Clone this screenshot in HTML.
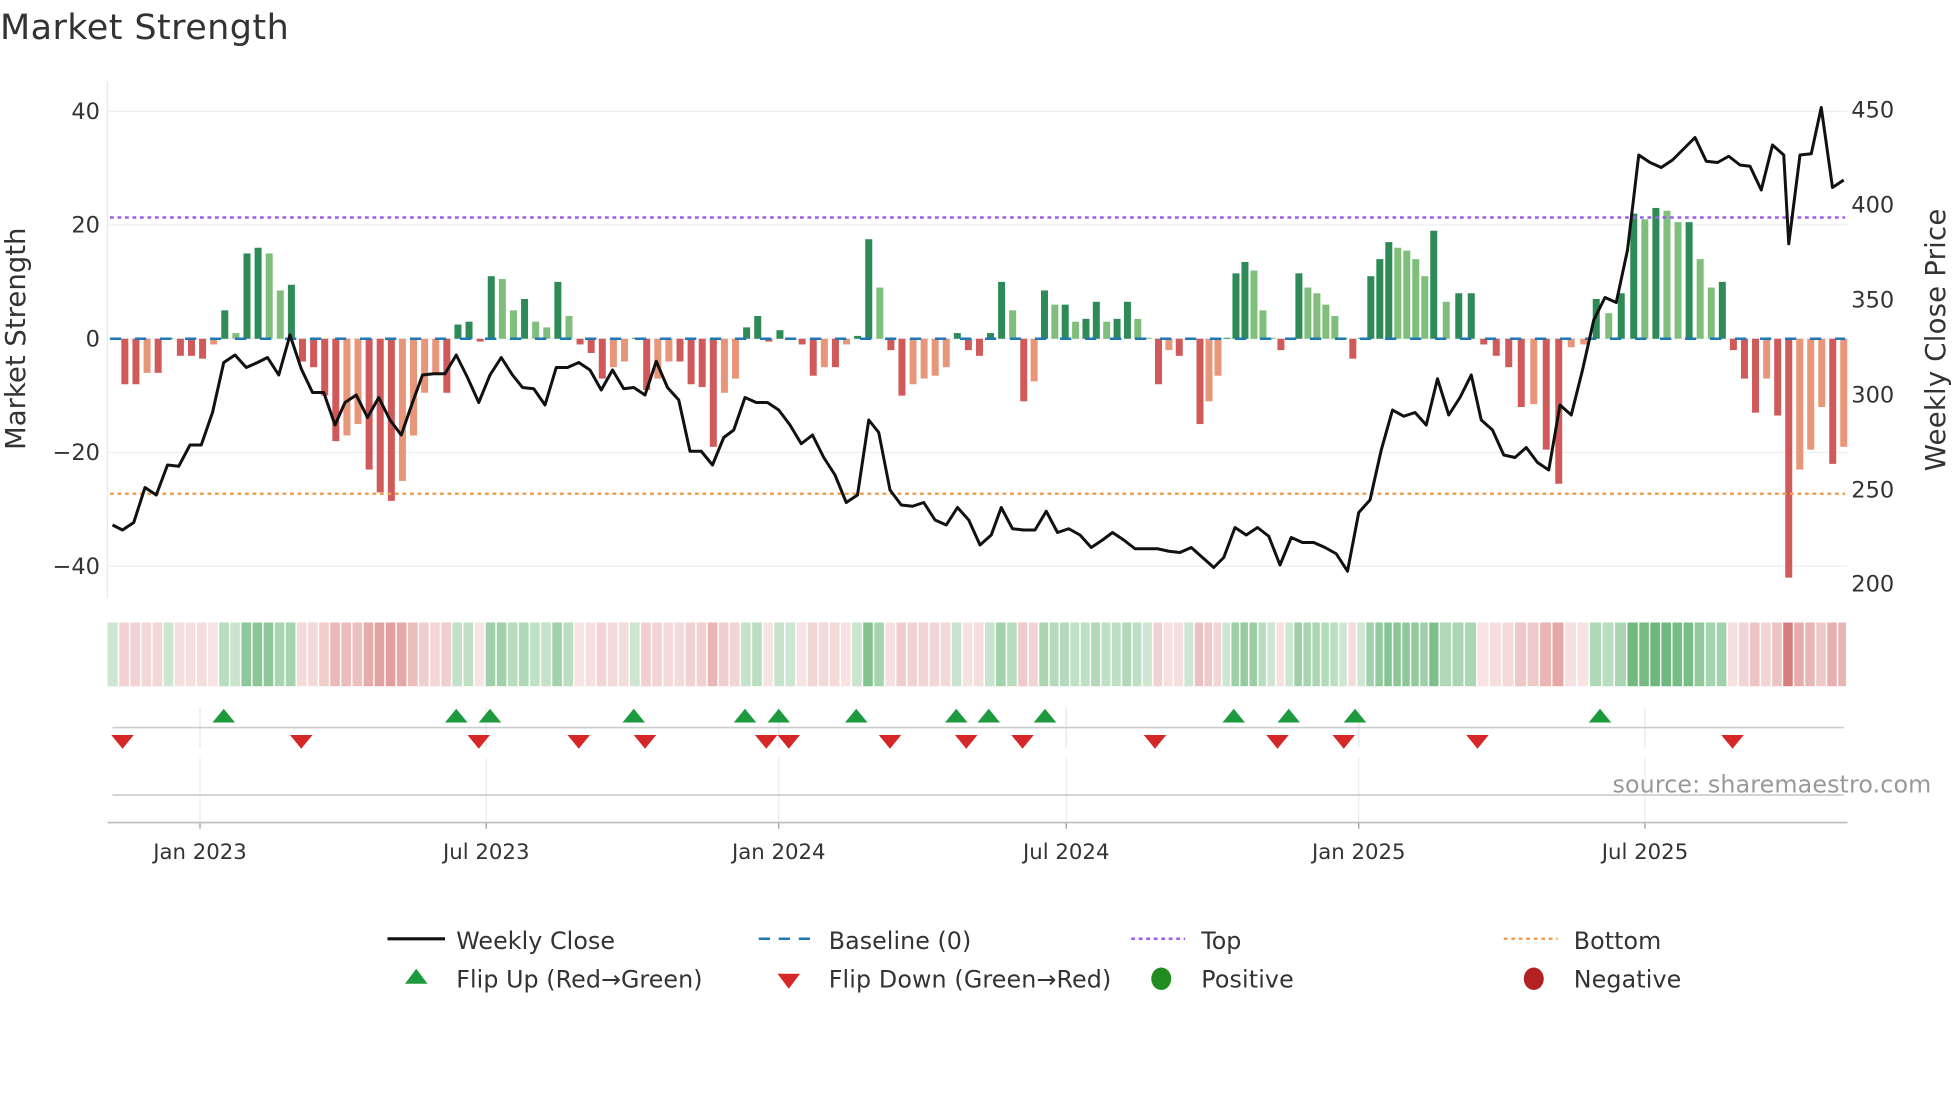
<!DOCTYPE html>
<html><head><meta charset="utf-8">
<style>
html,body{margin:0;padding:0;background:#fff;}
svg{display:block;}
text{font-family:"DejaVu Sans","Liberation Sans",sans-serif;fill:#333;}
</style></head>
<body>
<svg id="s" width="1960" height="1102" viewBox="0 0 1568 881.6" xmlns="http://www.w3.org/2000/svg">
<rect width="1568" height="882" fill="#fff"/>
<text x="0" y="31" font-size="28" textLength="231">Market Strength</text>
<g id="grid"></g>
<g id="bars"></g>
<g id="heat"></g>
<g id="marks"></g>
<g id="line"></g>
<g id="labels"></g>
<text x="1545" y="634" font-size="19" text-anchor="end" style="fill:#999" textLength="255">source: sharemaestro.com</text>
<text transform="translate(20,271) rotate(-90)" font-size="22" text-anchor="middle" textLength="178">Market Strength</text>
<text transform="translate(1556,272) rotate(-90)" font-size="22" text-anchor="middle" textLength="210">Weekly Close Price</text>
<line x1="310" y1="751" x2="356" y2="751" stroke="#111" stroke-width="2.5"/>
<text x="365" y="759" font-size="19" textLength="127">Weekly Close</text>
<line x1="607" y1="751" x2="650" y2="751" stroke="#1f77b4" stroke-width="2" stroke-dasharray="9,7"/>
<text x="663" y="759" font-size="19" textLength="114">Baseline (0)</text>
<line x1="905" y1="751" x2="948" y2="751" stroke="#9b5de5" stroke-width="2" stroke-dasharray="3,3"/>
<text x="961" y="759" font-size="19">Top</text>
<line x1="1203" y1="751" x2="1246" y2="751" stroke="#f0a050" stroke-width="2" stroke-dasharray="3,3"/>
<text x="1259" y="759" font-size="19" textLength="70">Bottom</text>
<polygon points="333,775 324,787 342,787" fill="#1e9a3e"/>
<text x="365" y="790" font-size="19" textLength="197">Flip Up (Red→Green)</text>
<polygon points="631,791 622,779 640,779" fill="#d62728"/>
<text x="663" y="790" font-size="19" textLength="226">Flip Down (Green→Red)</text>
<ellipse cx="929" cy="783" rx="8" ry="9" fill="#228b22"/>
<text x="961" y="790" font-size="19" textLength="74">Positive</text>
<ellipse cx="1227" cy="783" rx="8" ry="9" fill="#b22222"/>
<text x="1259" y="790" font-size="19" textLength="86">Negative</text>
</svg>
<script>
var NS="http://www.w3.org/2000/svg";
function el(p,t,a,txt){var e=document.createElementNS(NS,t);for(var k in a)e.setAttribute(k,a[k]);if(txt!=null)e.textContent=txt;document.getElementById(p).appendChild(e);return e;}
[89,180,271,362,453].forEach(function(y){el('grid','line',{x1:86,x2:1478,y1:y,y2:y,stroke:'#f0f0f3','stroke-width':1.2});});
el('grid','line',{x1:86,x2:86,y1:65,y2:478,stroke:'#e8e8ec','stroke-width':1});
var ticks=[[160,'Jan 2023'],[389,'Jul 2023'],[623,'Jan 2024'],[853,'Jul 2024'],[1087,'Jan 2025'],[1316,'Jul 2025']];
ticks.forEach(function(t){
 el('grid','line',{x1:t[0],x2:t[0],y1:566,y2:598,stroke:'#e6e6e6','stroke-width':1});
 el('grid','line',{x1:t[0],x2:t[0],y1:606,y2:658,stroke:'#ececec','stroke-width':1});
 el('grid','line',{x1:t[0],x2:t[0],y1:658,y2:663,stroke:'#999','stroke-width':1});
 el('labels','text',{x:t[0],y:687,'font-size':17,'text-anchor':'middle'},t[1]);
});
el('grid','line',{x1:90,x2:1475,y1:582,y2:582,stroke:'#ccc','stroke-width':1.3});
el('grid','line',{x1:90,x2:1475,y1:636,y2:636,stroke:'#ccc','stroke-width':1.3});
el('grid','line',{x1:86,x2:1478,y1:658,y2:658,stroke:'#bbb','stroke-width':1.3});
[[89,'40'],[180,'20'],[271,'0'],[362,'\u221220'],[453,'\u221240']].forEach(function(a){el('labels','text',{x:80,y:a[0]+6,'font-size':18,'text-anchor':'end'},a[1]);});
[[88,'450'],[164,'400'],[240,'350'],[316,'300'],[392,'250'],[467,'200']].forEach(function(a){el('labels','text',{x:1481,y:a[0]+6,'font-size':18},a[1]);});
var v=[0,-8,-8,-6,-6,0,-3,-3,-3.5,-1,5,1,15,16,15,8.5,9.5,-4,-5,-10,-18,-17,-15,-23,-27,-28.5,-25,-17,-9.5,-6,-9.5,2.5,3,-0.5,11,10.5,5,7,3,2,10,4,-1,-2.5,-7,-5,-4,0,-9,-7,-4,-4,-8,-8.5,-19,-9.5,-7,2,4,-0.5,1.5,0,-1,-6.5,-5,-5,-1,0.5,17.5,9,-2,-10,-8,-7,-6.5,-5,1,-2,-3,1,10,5,-11,-7.5,8.5,6,6,3,3.5,6.5,3,3.5,6.5,3.5,0,-8,-2,-3,0,-15,-11,-6.5,0,11.5,13.5,12,5,0,-2,0,11.5,9,8,6,4,0,-3.5,0,11,14,17,16,15.5,14,11,19,6.5,8,8,-1,-3,-5,-12,-11.5,-19.5,-25.5,-1.5,-1,7,4.5,8,22,21,23,22.5,20.5,20.5,14,9,10,-2,-7,-13,-7,-13.5,-42,-23,-19.5,-12,-22,-19];
var N=v.length;
var anc=[[0,91],[v.indexOf(17.5),695],[v.indexOf(-11),819],[v.lastIndexOf(-15),960],[v.indexOf(19),1147],[v.indexOf(22),1307],[v.indexOf(-42),1431],[N-1,1475]];
function X(i){for(var k=0;k<anc.length-1;k++){var a=anc[k],b=anc[k+1];if(i<=b[0])return a[1]+(i-a[0])*(b[1]-a[1])/(b[0]-a[0]);}return 1475;}
for(var i=0;i<N;i++){
 var x=X(i),val=v[i],p=i>0?v[i-1]:0,c;
 if(val>=0){c=(val>=p||p<0)?'#2e8b57':'#7fbf7b';}else{c=(val<=p||p>0)?'#d05a5a':'#e8967a';}
 var h=Math.abs(val)*4.55; if(h<0.5)h=0.8;
 el('bars','rect',{x:x-2.8,y:val>=0?271-h:271,width:5.6,height:h,fill:c});
 var xl=i==0?86:(X(i-1)+x)/2, xr=i==N-1?1478:(X(i+1)+x)/2;
 var a,col;
 if(val>=0){a=0.35+0.65*Math.min(1,val/23);col='rgba(60,160,80,'+(a*0.75)+')';}
 else{a=0.2+0.8*Math.min(1,-val/42);col='rgba(200,70,70,'+(a*0.7)+')';}
 el('heat','rect',{x:xl,y:498,width:Math.max(1,xr-xl-1.2),height:51,fill:col});
}
el('bars','line',{x1:88,x2:1476,y1:271,y2:271,stroke:'#1f77b4','stroke-width':2,'stroke-dasharray':'9,11'});
el('bars','line',{x1:88,x2:1476,y1:174,y2:174,stroke:'#9b5de5','stroke-width':2,'stroke-dasharray':'3,3'});
el('bars','line',{x1:88,x2:1476,y1:395,y2:395,stroke:'#f0a050','stroke-width':2,'stroke-dasharray':'3,3'});
[179,365,392,507,596,623,685,765,791,836,987,1031,1084,1280].forEach(function(x){el('marks','polygon',{points:(x)+',567 '+(x-9)+',578 '+(x+9)+',578',fill:'#1e9a3e'});});
[98,241,383,463,516,613,631,712,773,818,924,1022,1075,1182,1386].forEach(function(x){el('marks','polygon',{points:(x)+',599 '+(x-9)+',588 '+(x+9)+',588',fill:'#d62728'});});
var L=[[90,420],[98,424],[107,418],[116,390],[125,396],[134,372],[143,373],[152,356],[161,356],[170,330],[179,290],[188,284],[197,294],[206,290],[214,286],[223,300],[232,268],[241,295],[250,314],[259,314],[268,340],[276,322],[285,316],[294,334],[303,318],[312,336],[321,348],[330,322],[338,300],[347,299],[356,299],[365,284],[374,302],[383,322],[392,300],[401,286],[410,300],[418,310],[427,311],[436,324],[445,294],[454,294],[463,290],[472,296],[481,312],[490,296],[499,311],[507,310],[516,316],[525,289],[534,310],[543,320],[552,361],[561,361],[570,372],[579,350],[587,344],[596,318],[605,322],[614,322],[623,328],[632,340],[641,355],[650,348],[659,366],[668,380],[677,402],[686,396],[695,336],[703,346],[712,392],[721,404],[730,405],[739,402],[748,416],[757,420],[766,406],[775,416],[784,436],[793,428],[801,406],[810,423],[819,424],[828,424],[837,409],[846,426],[855,423],[864,428],[873,438],[882,432],[890,426],[899,432],[908,439],[917,439],[926,439],[935,441],[944,442],[953,438],[962,446],[971,454],[979,446],[988,422],[997,428],[1006,422],[1015,429],[1024,452],[1033,430],[1042,434],[1051,434],[1060,438],[1069,443],[1078,457],[1087,410],[1096,400],[1105,360],[1114,328],[1123,333],[1132,330],[1141,340],[1150,303],[1159,332],[1168,318],[1177,300],[1185,336],[1194,344],[1203,364],[1212,366],[1221,358],[1230,370],[1239,376],[1248,324],[1257,332],[1266,296],[1275,256],[1284,238],[1293,242],[1302,200],[1311,124],[1320,130],[1329,134],[1338,128],[1347,119],[1356,110],[1365,129],[1374,130],[1383,125],[1392,132],[1400,133],[1409,152],[1418,116],[1427,124],[1431,195],[1440,124],[1449,123],[1457,86],[1466,150],[1475,144]];
el('line','polyline',{points:L.map(function(p){return p.join(',');}).join(' '),fill:'none',stroke:'#111','stroke-width':2.4,'stroke-linejoin':'round'});
</script>
</body></html>
